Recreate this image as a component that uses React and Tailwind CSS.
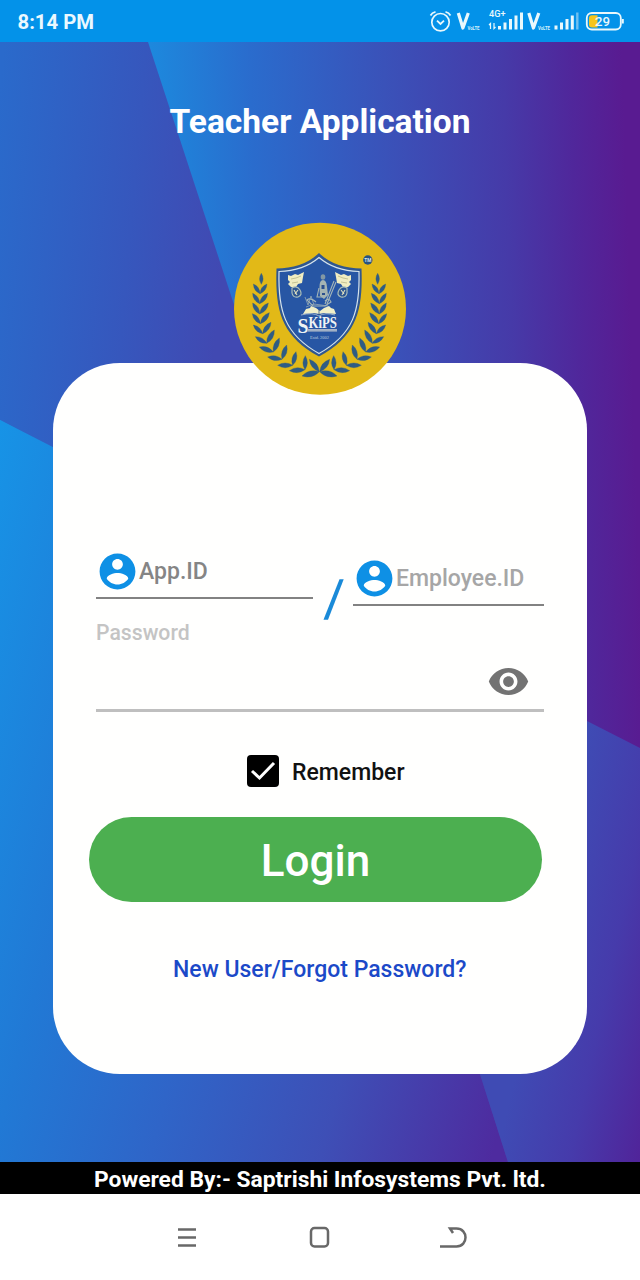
import React from "react";

function Backdrop() {
  return (
    <svg className="absolute inset-0 h-full w-full" viewBox="0 42 640 1120" preserveAspectRatio="none" aria-hidden="true">
      <defs>
        <linearGradient id="bgLeft" gradientUnits="userSpaceOnUse" x1="0" y1="90" x2="235" y2="110">
          <stop offset="0" stopColor="#2a6acb" />
          <stop offset="0.6" stopColor="#3657bd" />
          <stop offset="1" stopColor="#4149b2" />
        </linearGradient>
        <linearGradient id="bgRight" gradientUnits="userSpaceOnUse" x1="145" y1="60" x2="622" y2="45">
          <stop offset="0" stopColor="#1c8ade" />
          <stop offset="0.22" stopColor="#2a6ccd" />
          <stop offset="0.5" stopColor="#3a52b9" />
          <stop offset="0.75" stopColor="#463aa8" />
          <stop offset="0.89" stopColor="#50279b" />
          <stop offset="1" stopColor="#591b91" />
        </linearGradient>
        <linearGradient id="bgBottomLeft" gradientUnits="userSpaceOnUse" x1="0" y1="430" x2="640" y2="600">
          <stop offset="0" stopColor="#1793e6" />
          <stop offset="0.27" stopColor="#2179d5" />
          <stop offset="0.5" stopColor="#2f65c8" />
          <stop offset="0.75" stopColor="#3e4fb6" />
          <stop offset="1" stopColor="#4e2b9f" />
        </linearGradient>
        <linearGradient id="bgBottomRight" gradientUnits="userSpaceOnUse" x1="520" y1="1050" x2="660" y2="1080">
          <stop offset="0" stopColor="#3f4bb4" />
          <stop offset="0.5" stopColor="#463bab" />
          <stop offset="1" stopColor="#512399" />
        </linearGradient>
      </defs>
      <rect x="0" y="42" width="640" height="1120" fill="url(#bgRight)" />
      <path d="M0 42H148L260 384V560L0 420Z" fill="url(#bgLeft)" />
      <path d="M0 420L260 553L420 900L480 1074L508 1162H0Z" fill="url(#bgBottomLeft)" />
      <path d="M420 640L587 721L640 748V1162H508L480 1074Z" fill="url(#bgBottomRight)" />
    </svg>
  );
}

// Each row is a pair of leaves: base, outer tip, inner tip.
const leafPairs = [
  [42, 71, 22, 42, 63, 42],
  [41, 101, 20, 70, 65, 70],
  [41, 132, 20, 99, 67, 99],
  [43, 161, 19, 131, 70, 128],
  [50, 191, 22, 165, 75, 157],
  [62, 220, 28, 200, 85, 180],
  [82, 246, 40, 231, 100, 204],
  [108, 268, 65, 261, 122, 225],
  [140, 286, 95, 286, 150, 245],
  [177, 299, 130, 302, 178, 257],
  [220, 305, 168, 318, 190, 268],
];

function leaf(x1, y1, x2, y2) {
  const mx = (x1 + x2) / 2;
  const my = (y1 + y2) / 2;
  const dx = (x2 - x1) * 0.32;
  const dy = (y2 - y1) * 0.32;
  return `M${x1} ${y1}Q${mx - dy} ${my + dx} ${x2} ${y2}Q${mx + dy} ${my - dx} ${x1} ${y1}Z`;
}

function Laurel() {
  return (
    <g fill="#2f5c84" stroke="#2f5c84" strokeWidth="1" transform="translate(18 54) scale(0.3333)">
      <path d={leaf(46, 43, 46, 10)} />
      {leafPairs.map(([bx, by, ox, oy, ix, iy]) => (
        <path key={by} d={leaf(bx, by, ox, oy) + leaf(bx, by, ix, iy)} />
      ))}
    </g>
  );
}

function Torch() {
  return (
    <g>
      <path d="M60 59l3 1 4-2 3 1 6-3-1 5-1 6-4 1-2 3-5 0-3-3 2-2-2-2z" fill="#f0edc2" />
      <path d="M63 63l5-1 5-2M64 67l6-1" stroke="#b9b886" strokeWidth="0.8" fill="none" />
      <path d="M64 72q5-3 8 2t-2 7q-5 1-6-4z" fill="#2c5592" stroke="#a9bdb9" strokeWidth="1.2" />
      <path d="M66 74l3 5M70 74l-3 4" stroke="#dcdfc0" strokeWidth="1.1" />
    </g>
  );
}

function Crest() {
  return (
    <svg className="block h-[184px] w-[184px]" viewBox="0 0 184 184" role="img" aria-label="SKiPS">
      <circle cx="92" cy="92.700" r="86" fill="#e2b917" />
      <Laurel />
      <g transform="translate(183 0) scale(-1 1)"><Laurel /></g>
      <path d="M91 37C80 48 65 52 48.500 52.500C47 94 53 120 91 140.500C129 120 135 94 133.500 52.500C117 52 102 48 91 37Z" fill="#30578f" />
      <path d="M91 41.500C80 51 67 55 51 55.500C50 94 56 118 91 137.500C126 118 132 94 131 55.500C115 55 102 51 91 41.500Z" fill="#2756a4" stroke="#d5e3ec" strokeWidth="1.2" />
      <Torch />
      <g transform="translate(183 0) scale(-1 1)"><Torch /></g>
      <g fill="none" stroke="#a4b5b8" strokeWidth="1.1">
        <path d="M106 65L97 88M108 66L99 88" />
        <path d="M91 72l-2 9 5 0 2-9M88 86q-6-5-9-2l6 6h12l6-4q-2-5-6-1" />
        <path d="M77 81l3 8 3-9 3 9M78 91l8-3 14 2" strokeWidth="0.7" />
      </g>
      <ellipse cx="95" cy="61" rx="2.300" ry="2.800" fill="#8298a4" />
      <path d="M91.500 71q0-7 3.500-7t4 7l1 8-4 4-4-3z" fill="#a5b4b3" />
      <path d="M93.500 69h3v4h-3zM94 77h3v2h-3z" fill="#2b4f8d" />
      <path d="M75 98l3-5 4-1 1-2 5 2 4 3 4-3 5-2 2 2 3 1 2 5-12-1-5 1-5-1z" fill="#f0efc9" />
      <path d="M91 93v6" stroke="#31548b" strokeWidth="0.8" />
      <path d="M73 99q12-3 18 1q6-4 16-1" fill="none" stroke="#b6c7d5" strokeWidth="0.8" />
      <text x="69.500" y="116.500" textLength="11" lengthAdjust="spacingAndGlyphs" fill="#eff4f5" className="font-['Liberation_Serif',serif] text-[22px] font-bold">S</text>
      <text x="80.500" y="112" textLength="28.500" lengthAdjust="spacingAndGlyphs" fill="#eff4f5" className="font-['Liberation_Serif',serif] text-[17px] font-bold">KiPS</text>
      <path d="M79.500 114.300H109" stroke="#afbccc" strokeWidth="2.500" />
      <path d="M79.500 115.200H109" stroke="#738eb5" strokeWidth="0.8" />
      <text x="82" y="122.500" textLength="19" lengthAdjust="spacingAndGlyphs" fill="#bdcddd" className="font-['Liberation_Serif',serif] text-[4px]">Estd. 2002</text>
      <circle cx="139.800" cy="44" r="4.700" fill="#285380" />
      <text x="136.300" y="45.800" textLength="7" lengthAdjust="spacingAndGlyphs" fill="#dfe6ee" className="font-['Roboto',sans-serif] text-[4.500px] font-bold">TM</text>
    </svg>
  );
}

function StatusIcons() {
  return (
    <svg className="block h-[42px] w-[220px]" viewBox="420 0 220 42" fill="none" stroke="#e9f8fc" aria-hidden="true">
      <circle cx="440.500" cy="22.200" r="8.700" strokeWidth="1.700" />
      <path d="M430.500 15.500Q432 12.500 435.500 11.800M450.500 15.500Q449 12.500 445.500 11.800" strokeWidth="1.700" />
      <path d="M437 20.700L440.500 24L444 20.700" strokeWidth="1.800" />
      <g strokeWidth="3.200" strokeLinejoin="round">
        <path d="M458.300 13L462.900 28L468.300 13" />
        <path d="M528.800 13L533.400 28L538.800 13" />
      </g>
      <g fill="#d3f0fb" stroke="none" className="font-['Roboto',sans-serif] text-[6px] font-bold">
        <text x="467.500" y="29.500" textLength="12" lengthAdjust="spacingAndGlyphs">VoLTE</text>
        <text x="538" y="29.500" textLength="12" lengthAdjust="spacingAndGlyphs">VoLTE</text>
      </g>
      <text x="489" y="17" textLength="16.500" lengthAdjust="spacingAndGlyphs" fill="#e9f8fc" stroke="none" className="font-['Roboto',sans-serif] text-[9px] font-medium">4G+</text>
      <path d="M490.500 29V23.500L489 25M494 23v5.500l1.500-1.500" strokeWidth="1.200" />
      <path d="M499.500 29.500V26M505 29.500V22.500M510.500 29.500V19M516 29.500V15.500M521.500 29.500V12.500" strokeWidth="3" />
      <path d="M556 29.500V25.500M561.500 29.500V22.500M567 29.500V19M572.300 29.500V15.500" strokeWidth="3" />
      <path d="M577.300 29.500V12.500" strokeWidth="2.400" stroke="#70c0f0" />
      <rect x="586.800" y="13" width="34" height="16.500" rx="5" strokeWidth="1.800" />
      <path d="M589 18.500Q589 15.200 592 15.200H597.500V27.400H592Q589 27.400 589 24.200Z" fill="#f6c51c" stroke="none" />
      <path d="M622.800 19v4.500" strokeWidth="2" />
      <text x="595" y="25.800" textLength="15" lengthAdjust="spacingAndGlyphs" fill="#e9f8fc" stroke="none" className="font-['Roboto',sans-serif] text-[13px] font-medium">29</text>
    </svg>
  );
}

function Account() {
  return (
    <svg className="block h-[43px] w-[43px] shrink-0" viewBox="0 0 24 24" fill="#0e90e5" aria-hidden="true">
      <path d="M12 2C6.480 2 2 6.480 2 12s4.480 10 10 10 10-4.480 10-10S17.520 2 12 2zm0 3c1.660 0 3 1.340 3 3s-1.340 3-3 3-3-1.340-3-3 1.340-3 3-3zm0 14.200c-2.500 0-4.710-1.280-6-3.220.030-1.990 4-3.080 6-3.080 1.990 0 5.970 1.090 6 3.080-1.290 1.940-3.500 3.220-6 3.220z" />
    </svg>
  );
}

export default function App() {
  return (
    <div className="flex h-[1280px] w-[640px] flex-col overflow-hidden bg-white font-['Roboto',sans-serif]">
      <header className="flex h-[42px] shrink-0 items-center justify-between bg-[#0392e9] pl-[17.500px]">
        <span className="pt-[3px] text-[20.300px] font-bold text-[#eaf8ff]">8:14 PM</span>
        <StatusIcons />
      </header>

      <main className="relative flex h-[1120px] shrink-0 flex-col">
        <Backdrop />
        <h1 className="relative mt-[59px] pt-px text-center text-[33.500px] leading-[39px] font-bold text-white">Teacher Application</h1>

        <section className="relative mt-[221.500px] ml-[53px] flex h-[711px] w-[533.500px] flex-col rounded-[67px] bg-[#fffffe]">
          <div className="absolute -top-[147px] left-[175px]">
            <Crest />
          </div>

          <div className="mt-[187px] flex items-start pl-[43px]">
            <label className="flex h-[49px] w-[217px] items-start border-b-2 border-[#828282]">
              <Account />
              <span className="pt-[8px] text-[23px] leading-[28px] font-medium text-[#858585]">App.ID</span>
            </label>
            <svg className="h-[80px] w-[40px]" viewBox="0 0 40 80" aria-hidden="true">
              <path d="M26.500 29.300h4.200L15 69.800h-4.500z" fill="#1a8ad8" />
            </svg>
            <label className="mt-[7px] flex h-[49px] w-[191px] items-start border-b-2 border-[#828282]">
              <Account />
              <span className="pt-[8px] text-[23px] leading-[28px] font-medium text-[#a6a6a6]">Employee.ID</span>
            </label>
          </div>

          <div className="-mt-[9px] ml-[43px] flex h-[91px] w-[448px] flex-col border-b-[3px] border-[#bfbfbf]">
            <span className="text-[21.200px] leading-[23px] font-medium text-[#c4c4c4]">Password</span>
            <svg className="mt-[16px] mr-[14px] h-[43px] w-[43px] self-end" viewBox="0 0 24 24" fill="#737373" aria-hidden="true">
              <path d="M12 4.500C7 4.500 2.730 7.610 1 12c1.730 4.390 6 7.500 11 7.500s9.270-3.110 11-7.500c-1.730-4.390-6-7.500-11-7.500zM12 17c-2.760 0-5-2.240-5-5s2.240-5 5-5 5 2.240 5 5-2.240 5-5 5zm0-8c-1.660 0-3 1.340-3 3s1.340 3 3 3 3-1.340 3-3-1.340-3-3-3z" />
            </svg>
          </div>

          <label className="mt-[43px] ml-[194px] flex h-8 items-center gap-[13px]">
            <svg className="h-8 w-8" viewBox="0 0 32 32" aria-hidden="true">
              <rect width="32" height="32" rx="4" fill="#000" />
              <path d="M5 16L12.500 23L27 8" fill="none" stroke="#fff" strokeWidth="3" />
            </svg>
            <span className="pt-[4px] text-[23px] leading-[28px] font-medium text-[#111]">Remember</span>
          </label>

          <button className="mt-[30px] ml-[36px] flex h-[85px] w-[453px] items-center justify-center rounded-full bg-[#4caf50] pt-[3px] text-[44px] font-medium text-white">Login</button>

          <a className="mt-[54px] text-center text-[23px] leading-[28px] font-medium text-[#1b49c8]">New User/Forgot Password?</a>
        </section>
      </main>

      <footer className="flex h-8 shrink-0 items-center justify-center bg-black pt-[4px] text-[22.800px] font-bold text-white">Powered By:- Saptrishi Infosystems Pvt. ltd.</footer>

      <nav className="flex h-[86px] items-center pl-[166px]">
        <svg className="h-[42px] w-[42px]" viewBox="0 0 42 42" fill="none" stroke="#686868" strokeWidth="2.700" aria-hidden="true">
          <path d="M12 13.500h18M12 21.500h18M12 29.500h18" />
        </svg>
        <svg className="ml-[91px] h-[42px] w-[42px]" viewBox="0 0 42 42" fill="none" stroke="#686868" strokeWidth="2.500" aria-hidden="true">
          <rect x="12" y="12" width="17" height="18.500" rx="3.500" />
        </svg>
        <svg className="ml-[91px] h-[42px] w-[42px]" viewBox="0 0 42 42" fill="none" stroke="#686868" strokeWidth="2.500" aria-hidden="true">
          <path d="M8 30.500H24.500C36.500 30.500 36.500 12.500 24.500 12.500H18L21 17" />
        </svg>
      </nav>
    </div>
  );
}
